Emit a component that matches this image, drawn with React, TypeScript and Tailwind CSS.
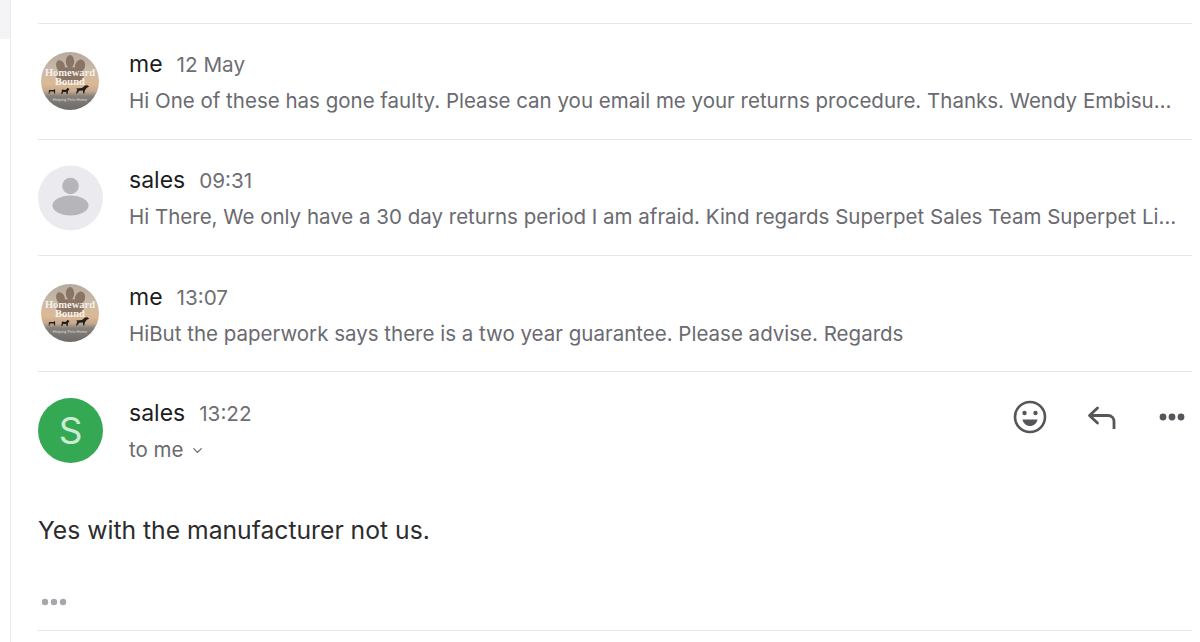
import { ChevronDown } from "lucide-react";

const FONT = "font-['Inter','Liberation_Sans',sans-serif]";

function LogoAvatar({ id }: { id: string }) {
  return (
    <svg viewBox="0 0 58 58" className="h-[58px] w-[58px] shrink-0">
      <defs>
        <linearGradient id={id} x1="0" y1="0" x2="0" y2="1">
          <stop offset="0" stopColor="#b5aaa0" />
          <stop offset="0.3" stopColor="#c9baa8" />
          <stop offset="0.55" stopColor="#dcb995" />
          <stop offset="0.68" stopColor="#c4a98e" />
          <stop offset="0.76" stopColor="#85807b" />
          <stop offset="1" stopColor="#6d6a68" />
        </linearGradient>
      </defs>
      <circle cx="29" cy="29" r="29" fill={`url(#${id})`} />
      <g fill="#8a7464">
        <ellipse cx="19.500" cy="14" rx="4.200" ry="6" transform="rotate(-20 19.500 14)" />
        <ellipse cx="29" cy="9.500" rx="4.200" ry="6.500" />
        <ellipse cx="39" cy="14" rx="5" ry="6.500" transform="rotate(18 39 14)" />
        <ellipse cx="29" cy="23" rx="14" ry="8" />
      </g>
      <text x="29" y="23.500" textAnchor="middle" fontSize="10.500" fontWeight="700" fill="#f6f1ea" fontFamily="Liberation Serif, serif">
        Homeward
      </text>
      <text x="29" y="32.500" textAnchor="middle" fontSize="10.500" fontWeight="700" fill="#f6f1ea" fontFamily="Liberation Serif, serif">
        Bound
      </text>
      <g fill="#221f1e">
        <path d="M8 38h4.500l1-1 .6 1v3.500h-.9l-.3-2h-4l-.4 2h-.9z" />
        <path d="M21 37.500l3.500.5 2-2.100 1.500.5.4 1.500-1.300.6-.4 3.500h-1.100l-.3-2-3.200.1-.7 1.900h-1.100z" />
        <path d="M35 36.500l6-.4 3-2.600 2.400-.3 1.700 1.500-2.200 1-2 2.500-.6 3.300h-1l-.5-3-3.500.2-2.300 2.800h-1.100l1.400-3.700z" />
      </g>
      <text x="29" y="49" textAnchor="middle" fontSize="4" fill="#dedad6" fontFamily="Liberation Sans, sans-serif">
        Helping Pets Home
      </text>
    </svg>
  );
}

function GhostAvatar() {
  return (
    <svg viewBox="0 0 65 66" className="h-[66px] w-[65px] shrink-0">
      <circle cx="32.500" cy="33" r="32.500" fill="#ebebef" />
      <circle cx="32.500" cy="21" r="8.300" fill="#b6b6ba" />
      <ellipse cx="32.500" cy="40.500" rx="18" ry="10" fill="#b6b6ba" />
    </svg>
  );
}

function Row({
  name,
  time,
  preview,
  avatar,
  slot,
  textSlot,
}: {
  name: string;
  time: string;
  preview: string;
  avatar: React.ReactNode;
  slot: string;
  textSlot?: string;
}) {
  return (
    <div className={`flex h-[116px] items-start border-t border-[#e6e6e8] ${slot}`}>
      {avatar}
      <div className={`min-w-0 flex-1 ${textSlot ?? ""}`}>
        <div className="flex items-baseline gap-[14px]">
          <span className="text-[23px] leading-[30px] text-[#1d1d1f]">{name}</span>
          <span className="text-[20.700px] leading-[30px] text-[#6e6e73]">{time}</span>
        </div>
        <p className="mt-[8px] whitespace-nowrap text-[20.500px] leading-[26px] text-[#6a6a70]">{preview}</p>
      </div>
    </div>
  );
}

export default function App() {
  return (
    <div className={`flex h-[642px] w-[1200px] overflow-hidden bg-white ${FONT}`}>
      <div className="h-full w-[11px] shrink-0 border-r border-[#ececee]">
        <div className="h-[39px] bg-[#f4f4f6]" />
      </div>
      <div className="w-[1181px] pl-[27px] pt-[23px]">
        <Row
          slot="pt-[28px] pl-[3px]"
          textSlot="-mt-[3px]"
          avatar={<div className="mr-[30px]"><LogoAvatar id="logo-a" /></div>}
          name="me"
          time="12 May"
          preview="Hi One of these has gone faulty. Please can you email me your returns procedure. Thanks. Wendy Embisu…"
        />
        <Row
          slot="pt-[25px]"
          avatar={<div className="mr-[26px]"><GhostAvatar /></div>}
          name="sales"
          time="09:31"
          preview="Hi There, We only have a 30 day returns period I am afraid. Kind regards Superpet Sales Team Superpet Li…"
        />
        <Row
          slot="pt-[28px] pl-[3px]"
          textSlot="-mt-[2px]"
          avatar={<div className="mr-[30px]"><LogoAvatar id="logo-b" /></div>}
          name="me"
          time="13:07"
          preview="HiBut the paperwork says there is a two year guarantee. Please advise. Regards"
        />
        <div className="h-[260px] border-y border-[#e6e6e8]">
          <div className="flex items-start pt-[26px]">
            <div className="mr-[26px] flex h-[65px] w-[65px] shrink-0 items-center justify-center rounded-full bg-[#34a853] text-[37px] text-[#c9ecd2]">
              S
            </div>
            <div className="flex-1">
              <div className="flex items-baseline gap-[14px]">
                <span className="text-[23px] leading-[30px] text-[#1d1d1f]">sales</span>
                <span className="text-[20.700px] leading-[30px] text-[#6e6e73]">13:22</span>
              </div>
              <div className="mt-[8px] flex items-center gap-[7px] text-[20.500px] leading-[26px] text-[#6a6a70]">
                to me
                <ChevronDown className="h-[15px] w-[15px]" strokeWidth={2} />
              </div>
            </div>
            <div className="flex items-center pr-[7px] pt-[2px] text-[#55555a]">
              <svg viewBox="0 0 34 34" className="h-[34px] w-[34px]" fill="none">
                <circle cx="17" cy="17" r="15" stroke="currentColor" strokeWidth="2.600" />
                <circle cx="11.500" cy="13" r="2.200" fill="currentColor" />
                <circle cx="22.500" cy="13" r="2.200" fill="currentColor" />
                <path d="M9.500 19.500h15c-.8 4-3.800 6.500-7.500 6.500s-6.700-2.500-7.500-6.500z" fill="currentColor" />
              </svg>
              <svg viewBox="0 0 30 26" className="ml-[40px] mt-[2px] h-[26px] w-[30px]" fill="none" stroke="currentColor" strokeWidth="2.800">
                <path d="M10.500 3L2.500 10.500l8 7.500" strokeLinecap="round" strokeLinejoin="round" />
                <path d="M3 10.500h18c3.500 0 6 2.500 6 6v7.500" />
              </svg>
              <svg viewBox="0 0 26 8" className="ml-[42px] h-[8px] w-[26px]" fill="currentColor">
                <circle cx="4" cy="4" r="3.400" />
                <circle cx="13" cy="4" r="3.400" />
                <circle cx="22" cy="4" r="3.400" />
              </svg>
            </div>
          </div>
          <p className="mt-[51px] text-[24.700px] leading-[32px] text-[#2c2c2e]">Yes with the manufacturer not us.</p>
          <svg viewBox="0 0 26 8" className="ml-[3px] mt-[52px] h-[8px] w-[26px]" fill="#a6a6ac">
            <circle cx="4" cy="4" r="3.200" />
            <circle cx="13" cy="4" r="3.200" />
            <circle cx="22" cy="4" r="3.200" />
          </svg>
        </div>
      </div>
    </div>
  );
}
